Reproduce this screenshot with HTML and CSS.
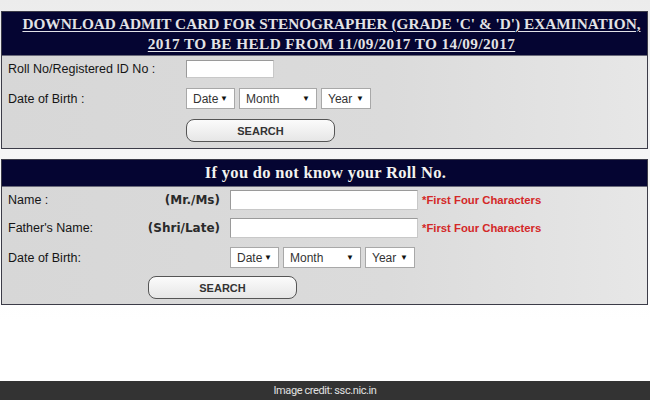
FILE: index.html
```html
<!DOCTYPE html>
<html>
<head>
<meta charset="utf-8">
<link rel="stylesheet" href="styles.css">
</head>
<body>
<div class="page">
  <section class="panel panel-one">
    <header class="head head-tall">
      <h1 class="title"><span class="line-one">DOWNLOAD ADMIT CARD FOR STENOGRAPHER (GRADE 'C' &amp; 'D') EXAMINATION,</span><br><span class="line-two">2017 TO BE HELD FROM 11/09/2017 TO 14/09/2017</span></h1>
    </header>
    <div class="body body-one">
      <div class="row">
        <span class="label label-wide">Roll No/Registered ID No :</span>
        <span class="input input-short"></span>
      </div>
      <div class="row">
        <span class="label label-wide">Date of Birth :</span>
        <div class="selects">
          <span class="select sel-date">Date<i>▼</i></span>
          <span class="select sel-month">Month<i>▼</i></span>
          <span class="select sel-year">Year<i>▼</i></span>
        </div>
      </div>
      <div class="row">
        <span class="label label-wide"></span>
        <button class="btn">SEARCH</button>
      </div>
    </div>
  </section>

  <section class="panel panel-two">
    <header class="head head-short">
      <h2 class="title title-two">If you do not know your Roll No.</h2>
    </header>
    <div class="body body-two">
      <div class="row">
        <span class="label label-name">Name :</span>
        <span class="prefix">(Mr./Ms)</span>
        <span class="input input-long"></span>
        <span class="hint">*First Four Characters</span>
      </div>
      <div class="row">
        <span class="label label-name">Father's Name:</span>
        <span class="prefix">(Shri/Late)</span>
        <span class="input input-long"></span>
        <span class="hint">*First Four Characters</span>
      </div>
      <div class="row row-dob">
        <span class="label label-name">Date of Birth:</span>
        <span class="prefix"></span>
        <div class="selects">
          <span class="select sel-date">Date<i>▼</i></span>
          <span class="select sel-month">Month<i>▼</i></span>
          <span class="select sel-year">Year<i>▼</i></span>
        </div>
      </div>
      <div class="row">
        <button class="btn btn-two">SEARCH</button>
      </div>
    </div>
  </section>

  <div class="spacer"></div>
  <footer class="credit">Image credit: ssc.nic.in</footer>
</div>
</body>
</html>
```

FILE: styles.css
```css
html, body {
  margin: 0;
  padding: 0;
}
body {
  width: 650px;
  height: 400px;
  overflow: hidden;
  background: linear-gradient(to bottom, #ececec 0px, #f6f6f6 150px, #ffffff 320px);
  font-family: "Liberation Sans", Arial, sans-serif;
  color: #1e1e1e;
}
.page {
  height: 400px;
  display: flex;
  flex-direction: column;
  padding-top: 11px;
  box-sizing: border-box;
}
.panel {
  margin: 0 1px 0 1px;
  width: 647px;
  border: 1px solid #3c3c48;
  box-sizing: border-box;
  background: linear-gradient(to right, #d7d7d7 0%, #dbdbdb 60%, #e7e7e7 100%);
}
.panel-two {
  margin-top: 10px;
}
.head {
  background: #050532;
  border-bottom: 1px solid #6a6a7a;
  display: flex;
  align-items: center;
  justify-content: center;
}
.head-tall {
  height: 43px;
  padding-left: 14px;
}
.head-short {
  height: 26px;
}
.title {
  margin: 0;
  font-family: "Liberation Serif", "Times New Roman", serif;
  font-weight: bold;
  font-size: 15.3px;
  line-height: 20px;
  color: #e2e2e8;
  text-align: center;
  white-space: nowrap;
  text-decoration: underline;
  text-decoration-thickness: 1px;
  text-underline-offset: 2px;
  text-shadow: 0 0 1px rgba(0, 0, 0, 0.6);
}
.line-two {
  letter-spacing: 0.4px;
}
.title-two {
  text-decoration: none;
  font-size: 16.5px;
  letter-spacing: 0.3px;
  color: #f2f2f2;
  padding-left: 2px;
}
.body {
  display: flex;
  flex-direction: column;
  padding-left: 6px;
}
.body-one {
  padding-top: 4px;
  padding-bottom: 6px;
  gap: 10px;
}
.body-two {
  padding-top: 3px;
  padding-bottom: 5px;
  gap: 8px;
}
.row-dob {
  margin-top: 1px;
}
.row {
  display: flex;
  align-items: center;
}
.label {
  font-size: 12.5px;
  color: #151515;
}
.label-wide {
  width: 178px;
}
.label-name {
  width: 118px;
}
.prefix {
  width: 94px;
  text-align: right;
  padding-right: 10px;
  font-family: "DejaVu Sans", Verdana, sans-serif;
  font-weight: bold;
  font-size: 12px;
  color: #2a2a2a;
}
.input {
  display: block;
  height: 18px;
  background: #fff;
  border: 1px solid #9a9a9a;
  border-right-color: #c8c8c8;
  border-bottom-color: #c8c8c8;
  box-sizing: border-box;
}
.input-short {
  width: 88px;
}
.input-long {
  width: 188px;
  height: 20px;
}
.hint {
  margin-left: 4px;
  color: #d42828;
  font-size: 11.3px;
  font-weight: bold;
}
.selects {
  display: flex;
  gap: 4px;
}
.select {
  height: 21px;
  box-sizing: border-box;
  background: #fff;
  border: 1px solid #a8a8a8;
  font-size: 12px;
  color: #333;
  display: flex;
  align-items: center;
  justify-content: space-between;
  padding: 0 6px 0 6px;
}
.select i {
  font-style: normal;
  font-size: 8px;
  color: #111;
}
.sel-date { width: 49px; }
.sel-month { width: 78px; }
.sel-year { width: 50px; }
.btn {
  width: 149px;
  height: 23px;
  border: 1px solid #555;
  border-radius: 8px;
  background: linear-gradient(to bottom, #fbfbfb, #e6e6e6);
  font-family: "Liberation Sans", Arial, sans-serif;
  font-weight: bold;
  font-size: 11px;
  color: #333;
  padding: 0;
}
.btn-two {
  margin-left: 140px;
}
.spacer {
  flex: 1;
}
.credit {
  height: 19px;
  background: #333333;
  color: #e0e0e0;
  font-family: Roboto, "Liberation Sans", sans-serif;
  font-size: 11px;
  letter-spacing: -0.4px;
  line-height: 19px;
  text-align: center;
}
```
